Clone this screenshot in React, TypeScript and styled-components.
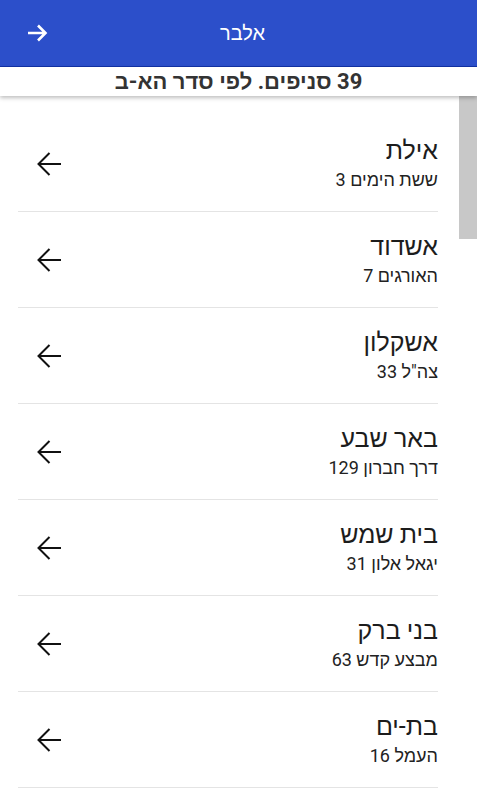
import * as React from 'react';
import styled, { createGlobalStyle } from 'styled-components';

type Branch = {
  city: string,
  address: string,
};

const branches: Array<Branch> = [
  { city: 'אילת', address: 'ששת הימים 3' },
  { city: 'אשדוד', address: 'האורגים 7' },
  { city: 'אשקלון', address: 'צה"ל 33' },
  { city: 'באר שבע', address: 'דרך חברון 129' },
  { city: 'בית שמש', address: 'יגאל אלון 31' },
  { city: 'בני ברק', address: 'מבצע קדש 63' },
  { city: 'בת-ים', address: 'העמל 16' },
  { city: 'גבעתיים', address: 'כצנלסון 54' },
  { city: 'הרצליה', address: 'סוקולוב 28' },
  { city: 'חדרה', address: 'הנשיא 42' },
  { city: 'חולון', address: 'המרכבה 9' },
  { city: 'חיפה', address: 'דרך העצמאות 81' },
  { city: 'טבריה', address: 'הגליל 12' },
  { city: 'ירושלים', address: 'יפו 97' },
  { city: 'כפר סבא', address: 'ויצמן 140' },
  { city: 'כרמיאל', address: 'מעלה כמון 4' },
  { city: 'לוד', address: 'הרצל 22' },
  { city: 'מודיעין', address: 'עמק דותן 11' },
  { city: 'נהריה', address: 'הגעתון 30' },
  { city: 'נס ציונה', address: 'ויצמן 2' },
  { city: 'נצרת עילית', address: 'ציפורן 5' },
  { city: 'נתניה', address: 'הרצל 58' },
  { city: 'עפולה', address: 'יהושע חנקין 14' },
  { city: 'פתח תקווה', address: 'ז\'בוטינסקי 72' },
  { city: 'קריית אתא', address: 'העצמאות 19' },
  { city: 'קריית גת', address: 'מלכי ישראל 8' },
  { city: 'קריית שמונה', address: 'תל חי 27' },
  { city: 'ראש העין', address: 'שבזי 36' },
  { city: 'ראשון לציון', address: 'רוטשילד 45' },
  { city: 'רחובות', address: 'הרצל 171' },
  { city: 'רמלה', address: 'הרצל 89' },
  { city: 'רמת גן', address: 'ביאליק 61' },
  { city: 'רמת השרון', address: 'סוקולוב 47' },
  { city: 'רעננה', address: 'אחוזה 120' },
  { city: 'שדרות', address: 'מנחם בגין 3' },
  { city: 'תל אביב', address: 'אבן גבירול 102' },
  { city: 'תל אביב', address: 'דיזנגוף 50' },
  { city: 'צפת', address: 'ירושלים 24' },
  { city: 'אום אל-פחם', address: 'הראשי 1' },
];

const GlobalStyle = createGlobalStyle`
  html, body, #root {
    margin: 0;
    height: 100%;
  }
  body {
    font-family: Roboto, "Liberation Sans", Arial, sans-serif;
    background: #fff;
    overflow: hidden;
  }
`;

const Page = styled.div`
  display: flex;
  flex-direction: column;
  height: 100vh;
`;

const Header = styled.header`
  display: flex;
  align-items: center;
  height: 66px;
  padding: 0 25px;
  background: #2c4fca;
  border-bottom: 1px solid #1232a6;
`;

const BackButton = styled.button`
  display: flex;
  padding: 0;
  border: 0;
  background: none;
  color: #fff;
  cursor: pointer;
`;

const HeaderTitle = styled.h1`
  flex: 1;
  margin: 0 16px 0 0;
  text-align: center;
  direction: rtl;
  color: #fff;
  font-size: 20px;
  font-weight: 500;
`;

const SortBar = styled.div`
  height: 29px;
  line-height: 29px;
  text-align: center;
  direction: rtl;
  color: #333;
  font-size: 22px;
  font-weight: bold;
  background: #fff;
  box-shadow: 0 2px 4px rgba(0, 0, 0, 0.25);
  position: relative;
  z-index: 1;
`;

const Body = styled.div`
  flex: 1;
  display: flex;
  min-height: 0;
`;

const List = styled.div`
  flex: 1;
  overflow-y: auto;
  padding-top: 20px;
  scrollbar-width: none;

  &::-webkit-scrollbar {
    display: none;
  }
`;

const ScrollTrack = styled.div`
  width: 18px;
  background: #fff;
`;

const ScrollThumb = styled.div`
  height: 143px;
  background: #c8c8c8;
`;

const Row = styled.div`
  display: flex;
  align-items: center;
  justify-content: space-between;
  direction: rtl;
  height: 95px;
  margin: 0 21px 0 18px;
  border-bottom: 1px solid #e4e4e4;
`;

const Info = styled.div`
  display: flex;
  flex-direction: column;
  gap: 4px;
`;

const City = styled.div`
  color: #1c1c1c;
  font-size: 25px;
`;

const Address = styled.div`
  color: #222;
  font-size: 18px;
`;

const ArrowSlot = styled.div`
  display: flex;
  margin-left: 19px;
  color: #111;
`;

const ForwardIcon = () => (
  <svg width="24" height="24" viewBox="0 0 24 24">
    <path d="M3 12h17M13 4.5l7.5 7.5-7.5 7.5" fill="none" stroke="currentColor" strokeWidth="2.6" />
  </svg>
);

const BackIcon = () => (
  <svg width="24" height="24" viewBox="0 0 24 24">
    <path d="M24 12H1.5M12.5 1 1.5 12l11 11" fill="none" stroke="currentColor" strokeWidth="2" />
  </svg>
);

const App: React.FC = () => (
  <Page>
    <GlobalStyle />
    <Header>
      <BackButton aria-label="חזרה">
        <ForwardIcon />
      </BackButton>
      <HeaderTitle>אלבר</HeaderTitle>
    </Header>
    <SortBar>{`${branches.length} סניפים. לפי סדר הא-ב`}</SortBar>
    <Body>
      <List>
        {branches.map((branch: Branch, i: number) => (
          <Row key={i}>
            <Info>
              <City>{branch.city}</City>
              <Address>{branch.address}</Address>
            </Info>
            <ArrowSlot>
              <BackIcon />
            </ArrowSlot>
          </Row>
        ))}
      </List>
      <ScrollTrack>
        <ScrollThumb />
      </ScrollTrack>
    </Body>
  </Page>
);

export default App;
